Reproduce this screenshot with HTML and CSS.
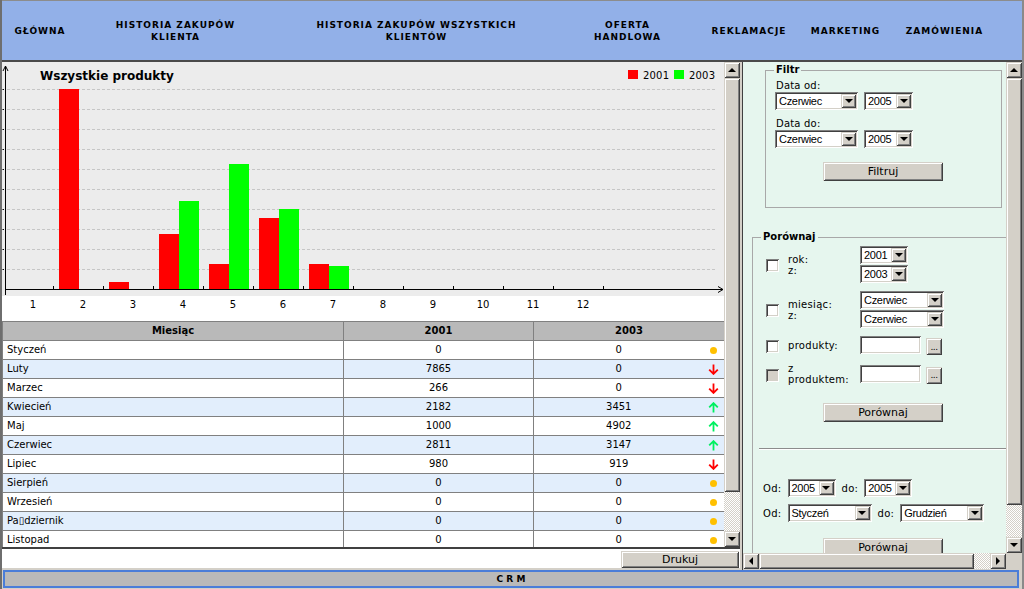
FILE: index.html
```html
<!DOCTYPE html>
<html lang="pl">
<head>
<meta charset="utf-8">
<title>CRM</title>
<link rel="stylesheet" href="styles.css">
</head>
<body>
<svg class="defs" width="0" height="0" aria-hidden="true">
  <symbol id="arr-down" viewBox="0 0 11 11"><path d="M5.5 0.5V10M1.2 5.6L5.5 9.9L9.8 5.6" fill="none" stroke="currentColor" stroke-width="1.8"/></symbol>
  <symbol id="arr-up" viewBox="0 0 11 11"><path d="M5.5 10.5V1M1.2 5.4L5.5 1.1L9.8 5.4" fill="none" stroke="currentColor" stroke-width="1.8"/></symbol>
</svg>
<div class="app">
  <nav class="nav">
    <a class="nav-item" href="#">GŁÓWNA</a>
    <a class="nav-item" href="#">HISTORIA ZAKUPÓW<br>KLIENTA</a>
    <a class="nav-item" href="#">HISTORIA ZAKUPÓW WSZYSTKICH<br>KLIENTÓW</a>
    <a class="nav-item" href="#">OFERTA<br>HANDLOWA</a>
    <a class="nav-item" href="#">REKLAMACJE</a>
    <a class="nav-item" href="#">MARKETING</a>
    <a class="nav-item" href="#">ZAMÓWIENIA</a>
  </nav>
  <div class="frames">
    <section class="frame-left">
      <div class="scroller">
        <div class="viewport">
          <svg class="chart" width="722" height="256" viewBox="0 0 722 256">
            <rect x="0" y="0" width="722" height="234" fill="#ececec"/>
            <g stroke="#c6c6c6" stroke-dasharray="3 2">
              <line x1="5" y1="27.5" x2="714" y2="27.5"/>
              <line x1="5" y1="47.5" x2="714" y2="47.5"/>
              <line x1="5" y1="67.5" x2="714" y2="67.5"/>
              <line x1="5" y1="87.5" x2="714" y2="87.5"/>
              <line x1="5" y1="107.5" x2="714" y2="107.5"/>
              <line x1="5" y1="127.5" x2="714" y2="127.5"/>
              <line x1="5" y1="147.5" x2="714" y2="147.5"/>
              <line x1="5" y1="167.5" x2="714" y2="167.5"/>
              <line x1="5" y1="187.5" x2="714" y2="187.5"/>
              <line x1="5" y1="207.5" x2="714" y2="207.5"/>
            </g>
            <g stroke="#000">
              <line x1="0.5" y1="27.5" x2="2" y2="27.5"/>
              <line x1="0.5" y1="47.5" x2="2" y2="47.5"/>
              <line x1="0.5" y1="67.5" x2="2" y2="67.5"/>
              <line x1="0.5" y1="87.5" x2="2" y2="87.5"/>
              <line x1="0.5" y1="107.5" x2="2" y2="107.5"/>
              <line x1="0.5" y1="127.5" x2="2" y2="127.5"/>
              <line x1="0.5" y1="147.5" x2="2" y2="147.5"/>
              <line x1="0.5" y1="167.5" x2="2" y2="167.5"/>
              <line x1="0.5" y1="187.5" x2="2" y2="187.5"/>
              <line x1="0.5" y1="207.5" x2="2" y2="207.5"/>
            </g>
            <g fill="#ff0000">
              <rect x="57" y="27" width="20" height="200"/>
              <rect x="107" y="220" width="20" height="7"/>
              <rect x="157" y="172" width="20" height="55"/>
              <rect x="207" y="202" width="20" height="25"/>
              <rect x="257" y="156" width="20" height="71"/>
              <rect x="307" y="202" width="20" height="25"/>
            </g>
            <g fill="#00ff00">
              <rect x="177" y="139" width="20" height="88"/>
              <rect x="227" y="102" width="20" height="125"/>
              <rect x="277" y="147" width="20" height="80"/>
              <rect x="327" y="204" width="20" height="23"/>
            </g>
            <g stroke="#000" fill="none">
              <path d="M3.5 233V4M1 9L3.5 4L6 9"/>
              <path d="M3 227.5H721M716 224.5L721 227.5L716 230.5"/>
              <path d="M51.5 224V227M101.5 224V227M151.5 224V227M201.5 224V227M251.5 224V227M301.5 224V227M351.5 224V227M401.5 224V227M451.5 224V227M501.5 224V227M551.5 224V227M601.5 224V227"/>
            </g>
            <text class="chart-title" x="38" y="18">Wszystkie produkty</text>
            <rect x="626" y="8" width="10" height="9" fill="#ff0000"/>
            <text class="chart-legend" x="641" y="17">2001</text>
            <rect x="672" y="8" width="10" height="9" fill="#00ff00"/>
            <text class="chart-legend" x="687" y="17">2003</text>
            <g class="chart-axis" text-anchor="middle">
              <text x="31" y="246">1</text>
              <text x="81" y="246">2</text>
              <text x="131" y="246">3</text>
              <text x="181" y="246">4</text>
              <text x="231" y="246">5</text>
              <text x="281" y="246">6</text>
              <text x="331" y="246">7</text>
              <text x="381" y="246">8</text>
              <text x="431" y="246">9</text>
              <text x="481" y="246">10</text>
              <text x="531" y="246">11</text>
              <text x="581" y="246">12</text>
            </g>
          </svg>
          <table class="data">
            <colgroup><col class="c-month"><col class="c-y1"><col class="c-y2"><col class="c-ico"></colgroup>
            <thead>
              <tr><th>Miesiąc</th><th>2001</th><th colspan="2">2003</th></tr>
            </thead>
            <tbody>
              <tr><td class="m">Styczeń</td><td>0</td><td>0</td><td class="ico"><span class="dot"></span></td></tr>
              <tr><td class="m">Luty</td><td>7865</td><td>0</td><td class="ico"><svg class="arr down"><use href="#arr-down"/></svg></td></tr>
              <tr><td class="m">Marzec</td><td>266</td><td>0</td><td class="ico"><svg class="arr down"><use href="#arr-down"/></svg></td></tr>
              <tr><td class="m">Kwiecień</td><td>2182</td><td>3451</td><td class="ico"><svg class="arr up"><use href="#arr-up"/></svg></td></tr>
              <tr><td class="m">Maj</td><td>1000</td><td>4902</td><td class="ico"><svg class="arr up"><use href="#arr-up"/></svg></td></tr>
              <tr><td class="m">Czerwiec</td><td>2811</td><td>3147</td><td class="ico"><svg class="arr up"><use href="#arr-up"/></svg></td></tr>
              <tr><td class="m">Lipiec</td><td>980</td><td>919</td><td class="ico"><svg class="arr down"><use href="#arr-down"/></svg></td></tr>
              <tr><td class="m">Sierpień</td><td>0</td><td>0</td><td class="ico"><span class="dot"></span></td></tr>
              <tr><td class="m">Wrzesień</td><td>0</td><td>0</td><td class="ico"><span class="dot"></span></td></tr>
              <tr><td class="m">Pa▯dziernik</td><td>0</td><td>0</td><td class="ico"><span class="dot"></span></td></tr>
              <tr><td class="m">Listopad</td><td>0</td><td>0</td><td class="ico"><span class="dot"></span></td></tr>
            </tbody>
          </table>
        </div>
        <div class="vscroll vs-left">
          <div class="sb-btn"><i class="tri tri-up"></i></div>
          <div class="sb-thumb"></div>
          <div class="sb-track"></div>
          <div class="sb-btn"><i class="tri tri-down"></i></div>
        </div>
      </div>
      <div class="print-bar"><button class="btn btn-print" type="button">Drukuj</button></div>
    </section>
    <div class="splitter"></div>
    <section class="frame-right">
      <div class="rf-main">
        <div class="rf-content">
          <div class="group group-filter">
            <span class="legend">Filtr</span>
            <div class="lbl">Data od:</div>
            <div class="sel-row">
              <div class="select w-month"><span class="val">Czerwiec</span><span class="dd"><i class="tri tri-down"></i></span></div>
              <div class="select w-year"><span class="val">2005</span><span class="dd"><i class="tri tri-down"></i></span></div>
            </div>
            <div class="lbl lbl-gap">Data do:</div>
            <div class="sel-row">
              <div class="select w-month"><span class="val">Czerwiec</span><span class="dd"><i class="tri tri-down"></i></span></div>
              <div class="select w-year"><span class="val">2005</span><span class="dd"><i class="tri tri-down"></i></span></div>
            </div>
            <button class="btn btn-wide btn-filter" type="button">Filtruj</button>
          </div>

          <div class="group group-compare">
            <span class="legend">Porównaj</span>
            <div class="cmp-grid">
              <span class="chk"></span>
              <div class="cmp-lbl">rok:<br>z:</div>
              <div class="stack">
                <div class="select w-year2"><span class="val">2001</span><span class="dd"><i class="tri tri-down"></i></span></div>
                <div class="select w-year2"><span class="val">2003</span><span class="dd"><i class="tri tri-down"></i></span></div>
              </div>

              <span class="chk"></span>
              <div class="cmp-lbl">miesiąc:<br>z:</div>
              <div class="stack">
                <div class="select w-month2"><span class="val">Czerwiec</span><span class="dd"><i class="tri tri-down"></i></span></div>
                <div class="select w-month2"><span class="val">Czerwiec</span><span class="dd"><i class="tri tri-down"></i></span></div>
              </div>

              <span class="chk"></span>
              <div class="cmp-lbl">produkty:</div>
              <div class="pick">
                <span class="input"></span><button class="btn btn-dots" type="button">...</button>
              </div>

              <span class="chk chk-off"></span>
              <div class="cmp-lbl">z<br>produktem:</div>
              <div class="pick">
                <span class="input"></span><button class="btn btn-dots" type="button">...</button>
              </div>
            </div>
            <button class="btn btn-wide btn-cmp" type="button">Porównaj</button>
            <hr class="sep">
            <div class="range-row">
              <span class="rl">Od:</span>
              <div class="select w-year2"><span class="val">2005</span><span class="dd"><i class="tri tri-down"></i></span></div>
              <span class="rl">do:</span>
              <div class="select w-year2"><span class="val">2005</span><span class="dd"><i class="tri tri-down"></i></span></div>
            </div>
            <div class="range-row range-row2">
              <span class="rl">Od:</span>
              <div class="select w-month2"><span class="val">Styczeń</span><span class="dd"><i class="tri tri-down"></i></span></div>
              <span class="rl">do:</span>
              <div class="select w-month2"><span class="val">Grudzień</span><span class="dd"><i class="tri tri-down"></i></span></div>
            </div>
            <button class="btn btn-wide btn-cmp btn-cmp2" type="button">Porównaj</button>
          </div>
        </div>
        <div class="vscroll vs-right">
          <div class="sb-btn"><i class="tri tri-up"></i></div>
          <div class="sb-thumb"></div>
          <div class="sb-track"></div>
          <div class="sb-btn"><i class="tri tri-down"></i></div>
        </div>
      </div>
      <div class="rf-bottom">
        <div class="hscroll">
          <div class="sb-btn"><i class="tri tri-left"></i></div>
          <div class="sb-thumb"></div>
          <div class="sb-track"></div>
          <div class="sb-btn"><i class="tri tri-right"></i></div>
        </div>
        <div class="corner"></div>
      </div>
    </section>
  </div>
  <footer class="status">C R M</footer>
</div>
</body>
</html>
```

FILE: styles.css
```css
* { box-sizing: border-box; }

html, body {
  margin: 0;
  padding: 0;
}

body {
  width: 1024px;
  height: 589px;
  overflow: hidden;
  background: #d4d0c8;
  font-family: "DejaVu Sans", Verdana, sans-serif;
  font-size: 10px;
  color: #000;
}

.defs { position: absolute; width: 0; height: 0; overflow: hidden; }

.app {
  width: 1024px;
  height: 589px;
  border-left: 2px solid #6e6e6e;
  border-right: 2px solid #8a8a8a;
  display: flex;
  flex-direction: column;
}

/* ---------- top navigation ---------- */
.nav {
  height: 60px;
  flex: none;
  border-top: 1px solid #8c8c8c;
  background: #92b0e8;
  display: grid;
  grid-template-columns: 76px 195px 287px 135px 108px 85px 113px 1fr;
  align-items: center;
}

.nav-item {
  text-align: center;
  font-weight: bold;
  font-size: 9px;
  letter-spacing: 1px;
  line-height: 12px;
  color: #000;
  text-decoration: none;
}

/* ---------- frames ---------- */
.frames {
  height: 510px;
  flex: none;
  border-top: 2px solid #4a4a4a;
  display: flex;
}

.frame-left {
  width: 738px;
  display: flex;
  flex-direction: column;
}

.scroller {
  height: 485px;
  display: flex;
}

.viewport {
  width: 722px;
  height: 485px;
  overflow: hidden;
  background: #fff;
}

.chart { display: block; }

.chart-title {
  font-family: "DejaVu Sans", sans-serif;
  font-weight: bold;
  font-size: 12px;
}

.chart-legend {
  font-family: "DejaVu Sans", sans-serif;
  font-size: 10px;
  letter-spacing: 0.2px;
}

.chart-axis {
  font-family: "DejaVu Sans", sans-serif;
  font-size: 10px;
}

/* ---------- table ---------- */
.data {
  border-collapse: collapse;
  table-layout: fixed;
  width: 722px;
  margin-top: 3px;
  font-size: 10px;
}

.data col.c-month { width: 341px; }
.data col.c-y1 { width: 190px; }
.data col.c-y2 { width: 170px; }
.data col.c-ico { width: 21px; }

.data tr { height: 19px; }

.data th,
.data td {
  border: 1px solid #808080;
  padding: 0 4px;
  text-align: center;
  white-space: nowrap;
  line-height: 12px;
}

.data th {
  background: #b9b9b9;
  font-weight: bold;
}

.data td.m { text-align: left; }

.data tbody tr:nth-child(even) td { background: #e2eefc; }

.data td.ico {
  border-left-style: hidden;
  padding: 0;
}

.dot {
  display: block;
  width: 7px;
  height: 7px;
  margin: 0 auto;
  border-radius: 50%;
  background: #ffc000;
}

.arr {
  display: block;
  width: 11px;
  height: 11px;
  margin: 0 auto;
}

.arr.down { color: #ff0000; }
.arr.up { color: #00f060; }

/* ---------- print bar ---------- */
.print-bar {
  height: 23px;
  border-top: 2px solid #404040;
  border-bottom: 2px solid #d4d0c8;
  background: #fff;
  display: flex;
  justify-content: flex-end;
  align-items: flex-start;
}

/* ---------- classic widgets ---------- */
.btn {
  font-family: "DejaVu Sans", Verdana, sans-serif;
  font-size: 11px;
  color: #000;
  background: #d4d0c8;
  border: 0;
  padding: 0;
  margin: 0;
  box-shadow: inset 1px 1px #d4d0c8, inset -1px -1px #404040, inset 2px 2px #fff, inset -2px -2px #808080;
  display: block;
}

.btn-print {
  width: 118px;
  height: 17px;
  margin: 2px 1px 0 0;
  line-height: 16px;
}

.btn-wide {
  width: 120px;
  height: 19px;
  line-height: 18px;
}

.vscroll {
  width: 16px;
  flex: none;
  display: flex;
  flex-direction: column;
}

.hscroll {
  height: 16px;
  flex: 1;
  display: flex;
}

.sb-btn,
.sb-thumb,
.dd {
  background: #d4d0c8;
  box-shadow: inset 1px 1px #d4d0c8, inset -1px -1px #404040, inset 2px 2px #fff, inset -2px -2px #808080;
}

.sb-btn {
  width: 16px;
  height: 16px;
  flex: none;
  display: flex;
  align-items: center;
  justify-content: center;
}

.sb-track {
  flex: 1;
  background: repeating-conic-gradient(#d4d0c8 0 25%, #ffffff 0 50%) 0 0 / 2px 2px;
}

.vs-left .sb-thumb { height: 414px; flex: none; }
.vs-right .sb-thumb { height: 427px; flex: none; }
.hscroll .sb-thumb { width: 215px; flex: none; }

.tri {
  display: block;
  width: 0;
  height: 0;
}

.tri-up {
  border-left: 4px solid transparent;
  border-right: 4px solid transparent;
  border-bottom: 4px solid #000;
  margin-top: -1px;
}

.tri-down {
  border-left: 4px solid transparent;
  border-right: 4px solid transparent;
  border-top: 4px solid #000;
}

.tri-left {
  border-top: 4px solid transparent;
  border-bottom: 4px solid transparent;
  border-right: 4px solid #000;
}

.tri-right {
  border-top: 4px solid transparent;
  border-bottom: 4px solid transparent;
  border-left: 4px solid #000;
}

.splitter {
  width: 3px;
  flex: none;
  background: #d4d0c8;
  border-right: 1px solid #404040;
}

/* ---------- right frame ---------- */
.frame-right {
  width: 279px;
  display: flex;
  flex-direction: column;
}

.rf-main {
  height: 491px;
  display: flex;
}

.rf-content {
  width: 263px;
  height: 491px;
  overflow: hidden;
  background: #e6f6ee;
}

.rf-bottom {
  height: 16px;
  display: flex;
}

.corner {
  width: 16px;
  background: #d4d0c8;
}

.group {
  position: relative;
  border: 1px solid #a8a8a8;
}

.legend {
  position: absolute;
  top: -7px;
  left: 8px;
  padding: 0 2px;
  background: #e6f6ee;
  font-weight: bold;
  font-size: 10px;
  line-height: 12px;
}

.group-filter {
  margin: 8px 0 0 22px;
  width: 237px;
  height: 138px;
  padding: 9px 0 0 10px;
}

.lbl {
  line-height: 12px;
  letter-spacing: 0.2px;
}

.lbl-gap { margin-top: 8px; }

.sel-row {
  display: flex;
  gap: 6px;
  margin-left: -1px;
}

.select {
  height: 18px;
  flex: none;
  display: flex;
  align-items: center;
  padding: 2px;
  background: #fff;
  box-shadow: inset 1px 1px #808080, inset -1px -1px #fff, inset 2px 2px #404040, inset -2px -2px #d4d0c8;
  font-family: "Liberation Sans", Arial, sans-serif;
  font-size: 11px;
  letter-spacing: -0.3px;
  line-height: 14px;
}

.select .val {
  flex: 1;
  padding-left: 2px;
  overflow: hidden;
  white-space: nowrap;
}

.select .dd {
  width: 15px;
  height: 14px;
  flex: none;
  display: flex;
  align-items: center;
  justify-content: center;
}

.w-month { width: 83px; }
.w-year { width: 49px; }
.w-year2 { width: 48px; }
.w-month2 { width: 84px; }

.btn-filter {
  margin: 14px 0 0 47px;
}

.group-compare {
  margin: 29px 0 0 9px;
  width: 270px;
  min-height: 340px;
  padding: 8px 0 0 13px;
}

.cmp-grid {
  display: grid;
  grid-template-columns: 13px 81px auto;
  row-gap: 8px;
  align-items: center;
}

.chk {
  width: 13px;
  height: 13px;
  background: #fff;
  box-shadow: inset 1px 1px #808080, inset -1px -1px #fff, inset 2px 2px #404040, inset -2px -2px #d4d0c8;
  margin-top: 2px;
}

.chk-off { background: #d4d0c8; }

.cmp-lbl {
  padding-left: 9px;
  line-height: 11px;
  letter-spacing: 0.3px;
}

.stack {
  display: flex;
  flex-direction: column;
  gap: 1px;
}

.pick {
  display: flex;
  align-items: flex-start;
}

.input {
  width: 61px;
  height: 18px;
  background: #fff;
  box-shadow: inset 1px 1px #808080, inset -1px -1px #fff, inset 2px 2px #404040, inset -2px -2px #d4d0c8;
}

.btn-dots {
  width: 16px;
  height: 17px;
  margin: 2px 0 0 5px;
  font-size: 9px;
  line-height: 14px;
  letter-spacing: -0.5px;
}

.btn-cmp {
  margin: 18px 0 0 57px;
}

.sep {
  width: 260px;
  height: 2px;
  margin: 26px 0 0 -7px;
  border: 0;
  border-top: 1px solid #8c8c8c;
  border-bottom: 1px solid #fff;
}

.range-row {
  display: flex;
  align-items: center;
  gap: 6px;
  margin: 29px 0 0 -3px;
}

.range-row2 { margin-top: 7px; }

.rl { letter-spacing: 0.3px; }

.btn-cmp2 { margin-top: 16px; }

/* ---------- status bar ---------- */
.status {
  height: 18px;
  flex: none;
  margin: 0 3px 0 1px;
  border: 2px solid #4a7dd8;
  background: #b9b9b9;
  text-align: center;
  font-weight: bold;
  font-size: 9px;
  line-height: 14px;
}
```
